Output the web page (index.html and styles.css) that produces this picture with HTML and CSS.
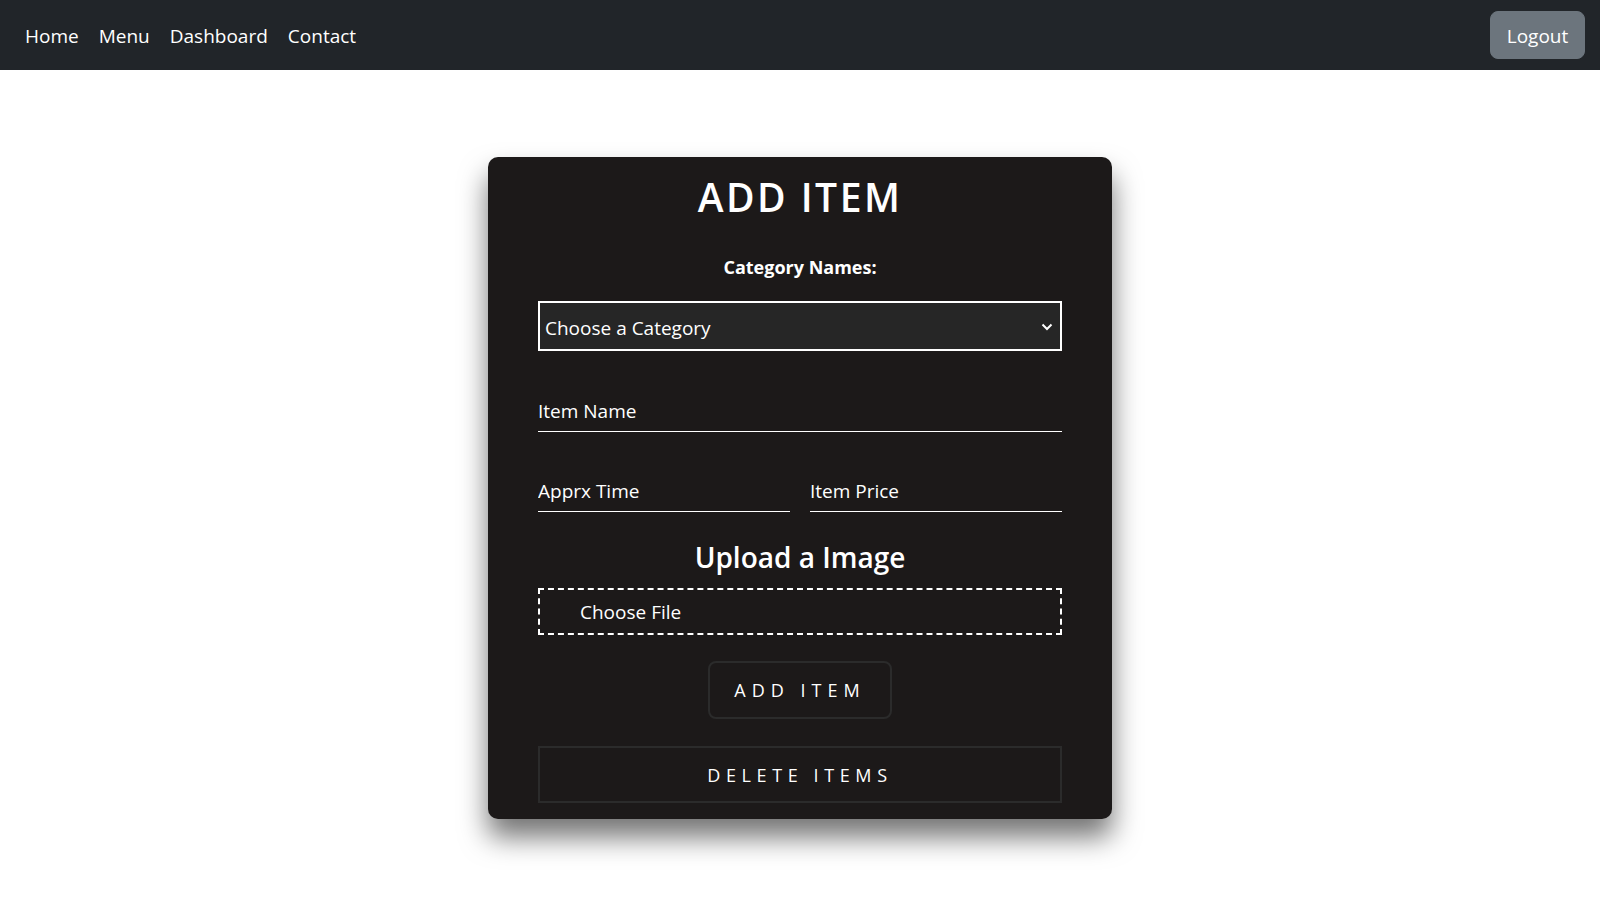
FILE: index.html
```html
<!DOCTYPE html>
<html lang="en">
<head>
<meta charset="utf-8">
<title>Add Item</title>
<link rel="stylesheet" href="styles.css">
</head>
<body>
<nav class="navbar">
  <ul class="nav-links">
    <li><a href="#" class="nav-link">Home</a></li>
    <li><a href="#" class="nav-link">Menu</a></li>
    <li><a href="#" class="nav-link">Dashboard</a></li>
    <li><a href="#" class="nav-link">Contact</a></li>
  </ul>
  <button class="btn-logout" type="button">Logout</button>
</nav>
<main class="page">
  <form class="card">
    <h1 class="card-title">ADD ITEM</h1>
    <label class="cat-label" for="cat">Category Names:</label>
    <div class="select-wrap">
      <select id="cat" class="select">
        <option>Choose a Category</option>
      </select>
      <svg class="chev" width="12" height="8" viewBox="0 0 12 8"><path d="M1.5 1.5 L6 6 L10.5 1.5" fill="none" stroke="#fff" stroke-width="2"/></svg>
    </div>
    <input class="line-input full" type="text" placeholder="Item Name">
    <div class="row">
      <input class="line-input" type="text" placeholder="Apprx Time">
      <input class="line-input" type="text" placeholder="Item Price">
    </div>
    <h2 class="upload-title">Upload a Image</h2>
    <label class="file-box"><input type="file" class="file-input"><span>Choose File</span></label>
    <div class="add-wrap"><button type="button" class="btn-add">ADD ITEM</button></div>
    <button type="button" class="btn-delete">DELETE ITEMS</button>
  </form>
</main>
</body>
</html>
```
FILE: styles.css
```css
* { box-sizing: border-box; }
body {
  margin: 0;
  font-family: "Open Sans", "Noto Sans", sans-serif;
  background: #fff;
  color: #fff;
}
.navbar {
  height: 70px;
  background: #212529;
  display: flex;
  align-items: center;
  justify-content: space-between;
  padding: 0 15px 0 15px;
}
.nav-links {
  list-style: none;
  margin: 0;
  padding: 0;
  display: flex;
}
.nav-link {
  display: block;
  color: #fff;
  text-decoration: none;
  font-size: 19px;
  line-height: 30px;
  padding: 6px 10px 4px;
}
.btn-logout {
  font-family: inherit;
  font-size: 19px;
  line-height: 30px;
  color: #fff;
  background: #6c757d;
  border: 1px solid #6c757d;
  border-radius: 8px;
  height: 48px;
  width: 95px;
  padding: 1px 0 0;
}
.page {
  padding-top: 87px;
  padding-bottom: 60px;
}
.card {
  width: 624px;
  margin: 0 auto;
  background: #1c1919;
  border-radius: 10px;
  padding: 16px 50px 16px;
  box-shadow: 0 18px 28px rgba(0, 0, 0, 0.55);
  display: flex;
  flex-direction: column;
}
.card-title {
  margin: 0;
  text-align: center;
  font-size: 39px;
  font-weight: 600;
  letter-spacing: 2.5px;
  line-height: 48px;
}
.cat-label {
  margin-top: 33px;
  text-align: center;
  font-weight: 700;
  font-size: 18px;
  line-height: 27px;
}
.select-wrap {
  position: relative;
  margin-top: 20px;
}
.select {
  width: 100%;
  height: 50px;
  appearance: none;
  -webkit-appearance: none;
  background: #262626;
  color: #fff;
  border: 2px solid #fff;
  border-radius: 0;
  font-family: inherit;
  font-size: 19px;
  padding: 3px 5px 0;
  outline: none;
}
.chev {
  position: absolute;
  right: 9px;
  top: 22px;
}
.line-input {
  display: block;
  width: 100%;
  background: transparent;
  border: none;
  border-bottom: 1.5px solid #fff;
  color: #fff;
  font-family: inherit;
  font-size: 19px;
  line-height: 30px;
  padding: 7px 0 5px;
  height: 44px;
  outline: none;
}
.line-input::placeholder { color: #fff; opacity: 1; }
.full { margin-top: 37px; }
.row {
  margin-top: 36px;
  display: flex;
  gap: 20px;
}
.upload-title {
  margin: 28px 0 0;
  text-align: center;
  font-size: 28px;
  font-weight: 600;
  line-height: 34px;
}
.file-box {
  margin-top: 14px;
  height: 47px;
  border: 2px dashed #fff;
  display: flex;
  align-items: center;
  padding-left: 40px;
  font-size: 19px;
}
.file-input { display: none; }
.add-wrap {
  margin-top: 26px;
  display: flex;
  justify-content: center;
}
.btn-add {
  width: 184px;
  height: 58px;
  background: transparent;
  border: 2px solid #2b2b2b;
  border-radius: 8px;
  color: #fff;
  font-family: inherit;
  font-size: 18px;
  letter-spacing: 6px;
  padding: 0;
}
.btn-delete {
  margin-top: 27px;
  width: 100%;
  height: 57px;
  background: transparent;
  border: 2px solid #2b2b2b;
  color: #fff;
  font-family: inherit;
  font-size: 18px;
  letter-spacing: 5.6px;
  padding: 0;
}
```
